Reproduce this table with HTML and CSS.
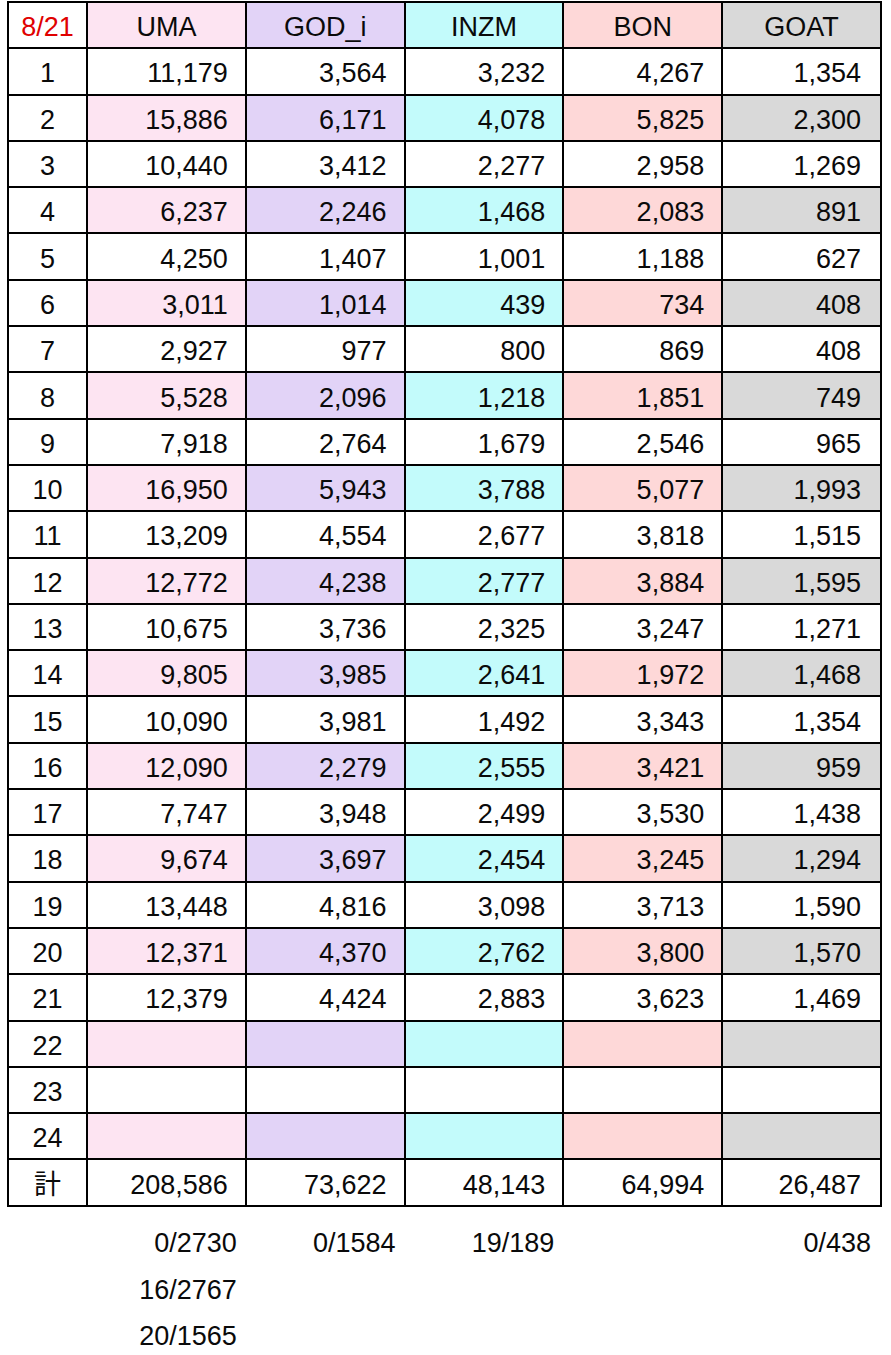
FILE: index.html
```html
<!DOCTYPE html>
<html lang="ja">
<head>
<meta charset="utf-8">
<title>8/21</title>
<link rel="stylesheet" href="styles.css">
</head>
<body>
<table class="sheet">
<colgroup><col class="c0"><col class="cw"><col class="cw"><col class="cw"><col class="cw"><col class="cw"></colgroup>
<thead>
<tr class="alt"><th class="date">8/21</th><th class="uma">UMA</th><th class="god">GOD_i</th><th class="inzm">INZM</th><th class="bon">BON</th><th class="goat">GOAT</th></tr>
</thead>
<tbody>
<tr><td>1</td><td>11,179</td><td>3,564</td><td>3,232</td><td>4,267</td><td>1,354</td></tr>
<tr class="alt"><td>2</td><td>15,886</td><td>6,171</td><td>4,078</td><td>5,825</td><td>2,300</td></tr>
<tr><td>3</td><td>10,440</td><td>3,412</td><td>2,277</td><td>2,958</td><td>1,269</td></tr>
<tr class="alt"><td>4</td><td>6,237</td><td>2,246</td><td>1,468</td><td>2,083</td><td>891</td></tr>
<tr><td>5</td><td>4,250</td><td>1,407</td><td>1,001</td><td>1,188</td><td>627</td></tr>
<tr class="alt"><td>6</td><td>3,011</td><td>1,014</td><td>439</td><td>734</td><td>408</td></tr>
<tr><td>7</td><td>2,927</td><td>977</td><td>800</td><td>869</td><td>408</td></tr>
<tr class="alt"><td>8</td><td>5,528</td><td>2,096</td><td>1,218</td><td>1,851</td><td>749</td></tr>
<tr><td>9</td><td>7,918</td><td>2,764</td><td>1,679</td><td>2,546</td><td>965</td></tr>
<tr class="alt"><td>10</td><td>16,950</td><td>5,943</td><td>3,788</td><td>5,077</td><td>1,993</td></tr>
<tr><td>11</td><td>13,209</td><td>4,554</td><td>2,677</td><td>3,818</td><td>1,515</td></tr>
<tr class="alt"><td>12</td><td>12,772</td><td>4,238</td><td>2,777</td><td>3,884</td><td>1,595</td></tr>
<tr><td>13</td><td>10,675</td><td>3,736</td><td>2,325</td><td>3,247</td><td>1,271</td></tr>
<tr class="alt"><td>14</td><td>9,805</td><td>3,985</td><td>2,641</td><td>1,972</td><td>1,468</td></tr>
<tr><td>15</td><td>10,090</td><td>3,981</td><td>1,492</td><td>3,343</td><td>1,354</td></tr>
<tr class="alt"><td>16</td><td>12,090</td><td>2,279</td><td>2,555</td><td>3,421</td><td>959</td></tr>
<tr><td>17</td><td>7,747</td><td>3,948</td><td>2,499</td><td>3,530</td><td>1,438</td></tr>
<tr class="alt"><td>18</td><td>9,674</td><td>3,697</td><td>2,454</td><td>3,245</td><td>1,294</td></tr>
<tr><td>19</td><td>13,448</td><td>4,816</td><td>3,098</td><td>3,713</td><td>1,590</td></tr>
<tr class="alt"><td>20</td><td>12,371</td><td>4,370</td><td>2,762</td><td>3,800</td><td>1,570</td></tr>
<tr><td>21</td><td>12,379</td><td>4,424</td><td>2,883</td><td>3,623</td><td>1,469</td></tr>
<tr class="alt"><td>22</td><td></td><td></td><td></td><td></td><td></td></tr>
<tr><td>23</td><td></td><td></td><td></td><td></td><td></td></tr>
<tr class="alt"><td>24</td><td></td><td></td><td></td><td></td><td></td></tr>
<tr class="total"><td>計</td><td>208,586</td><td>73,622</td><td>48,143</td><td>64,994</td><td>26,487</td></tr>
</tbody>
</table>
<table class="notes">
<colgroup><col class="c0"><col class="cw"><col class="cw"><col class="cw"><col class="cw"><col class="cw"></colgroup>
<tbody>
<tr><td></td><td>0/2730</td><td>0/1584</td><td>19/189</td><td></td><td>0/438</td></tr>
<tr><td></td><td>16/2767</td><td></td><td></td><td></td><td></td></tr>
<tr><td></td><td class="last">20/1565</td><td></td><td></td><td></td><td></td></tr>
</tbody>
</table>
</body>
</html>
```
FILE: styles.css
```css
html, body {
  margin: 0;
  padding: 0;
  background: #ffffff;
}
body {
  font-family: "Liberation Sans", Arial, "Noto Sans CJK JP", sans-serif;
  font-size: 27px;
  color: #0a0a0a;
}
.sheet {
  border-collapse: collapse;
  table-layout: fixed;
  width: 873px;
  margin: 1px 0 0 7px;
}
.c0 { width: 79px; }
.cw { width: 158.8px; }
.sheet th,
.sheet td {
  border: 2px solid #000000;
  height: 46.3px;
  padding: 5px 17px 0 0;
  box-sizing: border-box;
  text-align: right;
  font-weight: normal;
  vertical-align: middle;
  line-height: 1;
}
.sheet th {
  text-align: center;
  padding: 5px 0 0 0;
}
.sheet td:first-child {
  text-align: center;
  padding: 5px 0 0 0;
}
.sheet .date { color: #e00000; }
.sheet tr.alt > :nth-child(2) { background: #fde4f2; }
.sheet tr.alt > :nth-child(3) { background: #e2d3f7; }
.sheet tr.alt > :nth-child(4) { background: #c3fbfb; }
.sheet tr.alt > :nth-child(5) { background: #fed8d8; }
.sheet tr.alt > :nth-child(6) { background: #d9d9d9; }
.sheet tr > :last-child { padding-right: 19px; }
.sheet tr > th:last-child { padding-right: 0; }
.notes {
  border-collapse: collapse;
  table-layout: fixed;
  width: 873px;
  margin: 12px 0 0 7px;
}
.notes td {
  height: 47px;
  box-sizing: border-box;
  padding: 2px 8px 0 0;
  text-align: right;
  vertical-align: middle;
  line-height: 1;
}
.notes td.last {
  border-bottom: 1px solid #e6e6e6;
}
.notes tr > :last-child { padding-right: 9px; }
```
